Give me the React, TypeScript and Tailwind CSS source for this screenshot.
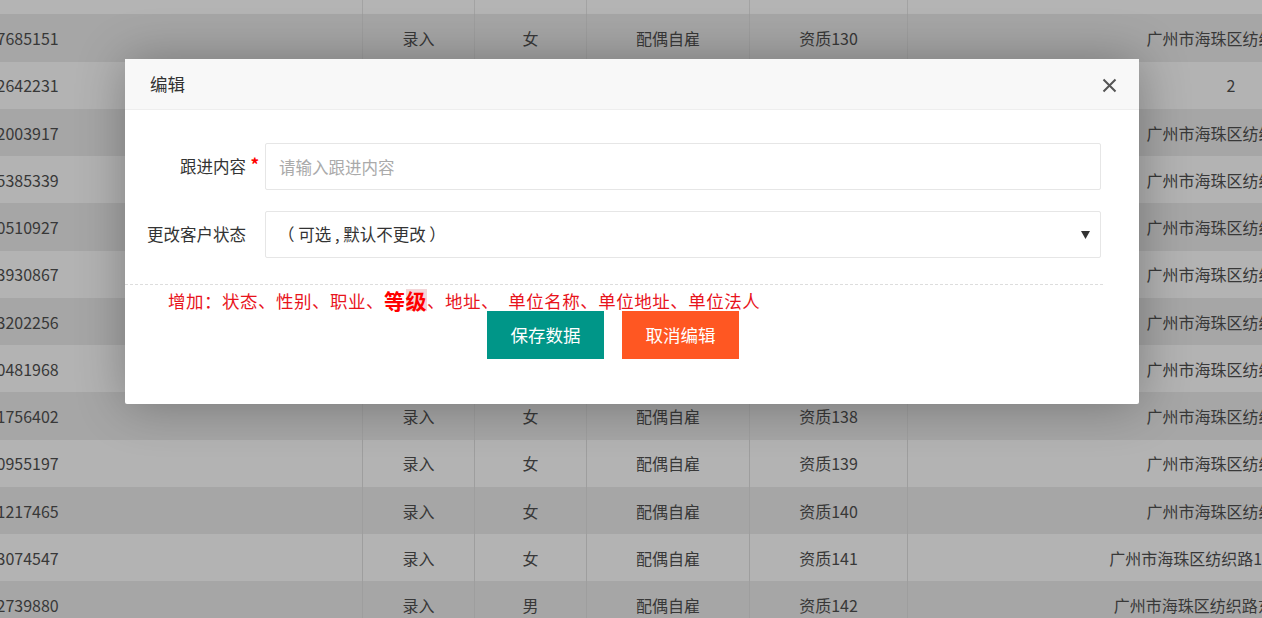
import React from "react"

interface Row {
  phone: string
  source: string
  sex: string
  job: string
  level: string
  address: string
}

const rows: Row[] = [
  { phone: "13907685151", source: "录入", sex: "女", job: "配偶自雇", level: "资质130", address: "广州市海珠区纺织路1号" },
  { phone: "13702642231", source: "录入", sex: "女", job: "配偶自雇", level: "资质131", address: "2" },
  { phone: "13602003917", source: "录入", sex: "女", job: "配偶自雇", level: "资质132", address: "广州市海珠区纺织路2号" },
  { phone: "13805385339", source: "录入", sex: "女", job: "配偶自雇", level: "资质133", address: "广州市海珠区纺织路3号" },
  { phone: "13900510927", source: "录入", sex: "女", job: "配偶自雇", level: "资质134", address: "广州市海珠区纺织路4号" },
  { phone: "13703930867", source: "录入", sex: "女", job: "配偶自雇", level: "资质135", address: "广州市海珠区纺织路5号" },
  { phone: "13603202256", source: "录入", sex: "女", job: "配偶自雇", level: "资质136", address: "广州市海珠区纺织路6号" },
  { phone: "13800481968", source: "录入", sex: "女", job: "配偶自雇", level: "资质137", address: "广州市海珠区纺织路7号" },
  { phone: "13901756402", source: "录入", sex: "女", job: "配偶自雇", level: "资质138", address: "广州市海珠区纺织路8号" },
  { phone: "13700955197", source: "录入", sex: "女", job: "配偶自雇", level: "资质139", address: "广州市海珠区纺织路9号" },
  { phone: "13601217465", source: "录入", sex: "女", job: "配偶自雇", level: "资质140", address: "广州市海珠区纺织路0号" },
  { phone: "13803074547", source: "录入", sex: "女", job: "配偶自雇", level: "资质141", address: "广州市海珠区纺织路1号大院201房" },
  { phone: "13902739880", source: "录入", sex: "男", job: "配偶自雇", level: "资质142", address: "广州市海珠区纺织路东二街128号" },
]

function BackgroundTable() {
  return (
    <div className="flex flex-col w-[1556px] text-[16px] text-[#383838]">
      <div className="h-[14.4px] bg-[#b4b4b4] flex">
        <div className="w-[363px] shrink-0 border-r border-[#a3a3a3]" />
        <div className="w-[112px] shrink-0 border-r border-[#a3a3a3]" />
        <div className="w-[112px] shrink-0 border-r border-[#a3a3a3]" />
        <div className="w-[163px] shrink-0 border-r border-[#a3a3a3]" />
        <div className="w-[158px] shrink-0 border-r border-[#a3a3a3]" />
      </div>
      {rows.map((row, i) => (
        <div
          key={i}
          className={`h-[47.25px] flex items-center ${i % 2 === 0 ? "bg-[#a6a6a6]" : "bg-[#b3b3b3]"}`}
        >
          <div className="w-[363px] shrink-0 h-full flex items-center overflow-hidden border-r border-[#9e9e9e]">
            <span className="-ml-[39px] whitespace-nowrap">{row.phone}</span>
          </div>
          <div className="w-[112px] shrink-0 h-full flex items-center justify-center border-r border-[#9e9e9e]">{row.source}</div>
          <div className="w-[112px] shrink-0 h-full flex items-center justify-center border-r border-[#9e9e9e]">{row.sex}</div>
          <div className="w-[163px] shrink-0 h-full flex items-center justify-center border-r border-[#9e9e9e]">{row.job}</div>
          <div className="w-[158px] shrink-0 h-full flex items-center justify-center border-r border-[#9e9e9e]">{row.level}</div>
          <div className="w-[646px] shrink-0 h-full flex items-center justify-center whitespace-nowrap">{row.address}</div>
        </div>
      ))}
    </div>
  )
}

function EditModal() {
  return (
    <div className="absolute left-[125px] top-[59px] w-[1014px] h-[345px] bg-white shadow-[1px_1px_50px_rgba(0,0,0,0.3)] rounded-[2px]">
      {/* header */}
      <div className="relative h-[51px] bg-[#f8f8f8] border-b border-[#eeeeee] flex items-center pl-[25px] text-[17.5px] text-[#333]">
        编辑
        <button className="absolute right-[22px] top-[19px] w-[15px] h-[15px] flex items-center justify-center">
          <svg width="15" height="15" viewBox="0 0 15 15">
            <path d="M1.5 1.5 L13.5 13.5 M13.5 1.5 L1.5 13.5" stroke="#555" strokeWidth="2" />
          </svg>
        </button>
      </div>

      {/* body */}
      <div className="pt-[33px]">
        <div className="flex items-center">
          <div className="relative w-[140px] pr-[19px] text-right text-[16.5px] text-[#333]">
            跟进内容
            <span className="absolute right-[6px] -top-[3px] text-[#ff0000] text-[17px] font-bold">*</span>
          </div>
          <input
            className="w-[836px] h-[47px] border border-[#e6e6e6] rounded-[2px] px-[13px] text-[16.5px] text-[#333] placeholder:text-[#aaaaaa] outline-none"
            placeholder="请输入跟进内容"
          />
        </div>

        <div className="flex items-center mt-[21px]">
          <div className="w-[140px] pr-[19px] text-right text-[16.5px] text-[#333]">更改客户状态</div>
          <div className="w-[836px] h-[47px] border border-[#e6e6e6] rounded-[2px] pl-[12px] pr-[10px] flex items-center justify-between text-[16.5px] text-[#333]">
            <span>（ 可选 , 默认不更改 ）</span>
            <svg width="9" height="8" viewBox="0 0 9 8">
              <path d="M0 0 H9 L4.5 8 Z" fill="#333" />
            </svg>
          </div>
        </div>

        <div className="mt-[26px] w-[978px] border-t border-dashed border-[#dddddd]" />

        <p className="mt-[4px] pl-[43px] h-[22px] flex items-end text-[17.5px] tracking-[0.5px] leading-[20px] text-[#e8141c] whitespace-nowrap">
          增加：状态、性别、职业、
          <span className="text-[21px] leading-[22px] font-bold text-[#ff0000]">等</span>
          <span className="text-[21px] leading-[22px] font-bold text-[#ff0000] bg-[#f3d6d8]">级</span>
          、地址、　单位名称、单位地址、单位法人
        </p>

        <div className="flex pl-[362px] gap-[18px]">
          <button className="w-[117px] h-[48px] bg-[#009688] text-white text-[17.5px]">保存数据</button>
          <button className="w-[117px] h-[48px] bg-[#ff5722] text-white text-[17.5px]">取消编辑</button>
        </div>
      </div>
    </div>
  )
}

export default function App() {
  return (
    <div
      className="relative w-[1262px] h-[618px] overflow-hidden bg-[#b3b3b3]"
      style={{ fontFamily: '"Noto Sans CJK SC", "Noto Sans", sans-serif' }}
    >
      <BackgroundTable />
      <EditModal />
    </div>
  )
}
